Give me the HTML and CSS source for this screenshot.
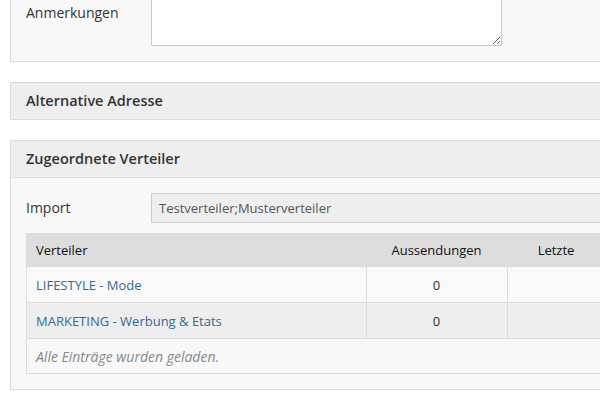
FILE: index.html
```html
<!DOCTYPE html>
<html lang="de">
<head>
<meta charset="utf-8">
<title>Verteiler</title>
<link rel="stylesheet" href="styles.css">
</head>
<body>
<div class="page">
  <section class="panel panel-first">
    <div class="panel-body">
      <div class="form-row">
        <label class="form-label">Anmerkungen</label>
        <textarea class="form-textarea"></textarea>
      </div>
    </div>
  </section>

  <section class="panel">
    <h2 class="panel-head panel-head-only">Alternative Adresse</h2>
  </section>

  <section class="panel">
    <h2 class="panel-head">Zugeordnete Verteiler</h2>
    <div class="panel-body">
      <div class="form-row form-row-import">
        <label class="form-label form-label-mid">Import</label>
        <div class="form-input">Testverteiler;Musterverteiler</div>
      </div>
      <table class="grid">
        <thead>
          <tr>
            <th class="c1">Verteiler</th>
            <th class="c2">Aussendungen</th>
            <th class="c3">Letzte</th>
            <th class="c4">Status</th>
          </tr>
        </thead>
        <tbody>
          <tr class="odd">
            <td class="c1"><a href="#">LIFESTYLE - Mode</a></td>
            <td class="c2">0</td>
            <td class="c3"></td>
            <td class="c4"></td>
          </tr>
          <tr class="even">
            <td class="c1"><a href="#">MARKETING - Werbung &amp; Etats</a></td>
            <td class="c2">0</td>
            <td class="c3"></td>
            <td class="c4"></td>
          </tr>
          <tr class="foot">
            <td colspan="4">Alle Einträge wurden geladen.</td>
          </tr>
        </tbody>
      </table>
    </div>
  </section>
</div>
</body>
</html>
```

FILE: styles.css
```css
html, body {
  margin: 0;
  padding: 0;
  overflow: hidden;
  background: #fff;
}
body {
  font-family: "Open Sans", "Noto Sans", sans-serif;
  font-size: 13px;
  color: #333;
}
.page {
  padding-left: 10px;
  width: 820px;
}
.panel {
  border: 1px solid #dcdcdc;
  background: #f8f8f8;
  margin-bottom: 20px;
}
.panel-first {
  margin-top: -44px;
  border-top: 0;
}
.panel-head {
  margin: 0;
  background: #eeeeee;
  border-bottom: 1px solid #dcdcdc;
  font-size: 14.5px;
  font-weight: 600;
  color: #333;
  height: 36px;
  line-height: 36px;
  padding-left: 15px;
}
.panel-head-only {
  border-bottom: 0;
}
.panel-body {
  padding: 15px;
}
.form-row {
  display: flex;
  align-items: flex-start;
}
.form-label {
  width: 125px;
  flex: none;
  font-size: 14px;
  line-height: 18px;
  padding-top: 33px;
  color: #333;
}
.form-textarea {
  width: 351px;
  height: 75px;
  box-sizing: border-box;
  border: 1px solid #cccccc;
  background: #fff;
  margin: 0;
  padding: 4px;
  display: block;
  font-family: inherit;
}
.form-row-import {
  align-items: center;
  margin-bottom: 10px;
}
.form-label-mid {
  padding-top: 0;
}
.form-input {
  flex: 1;
  height: 30px;
  box-sizing: border-box;
  border: 1px solid #cccccc;
  background: #eeeeee;
  color: #555;
  font-size: 13px;
  line-height: 28px;
  padding-left: 7px;
}
.grid {
  border-collapse: collapse;
  table-layout: fixed;
  width: 780px;
  border: 1px solid #dcdcdc;
}
.grid th, .grid td {
  font-size: 13px;
  padding: 0 9px;
  text-align: left;
}
.grid th {
  background: #dddddd;
  height: 32px;
  font-weight: 400;
  color: #111;
}
.grid td {
  height: 35px;
  border-top: 1px solid #dcdcdc;
  color: #333;
}
.grid .c1 { width: 321px; }
.grid .c2 { width: 123px; text-align: center; }
.grid .c3 { width: 80px; text-align: center; }
.grid td.c2, .grid td.c3, .grid td.c4 { border-left: 1px solid #dcdcdc; }
.grid tr.odd td { background: #f9f9f9; }
.grid tr.even td { background: #eeeeee; }
.grid tr.foot td {
  background: #f8f8f8;
  font-style: italic;
  font-size: 14px;
  color: #888;
  height: 34px;
}
.grid a {
  color: #2f6a9c;
  text-decoration: none;
}
```
